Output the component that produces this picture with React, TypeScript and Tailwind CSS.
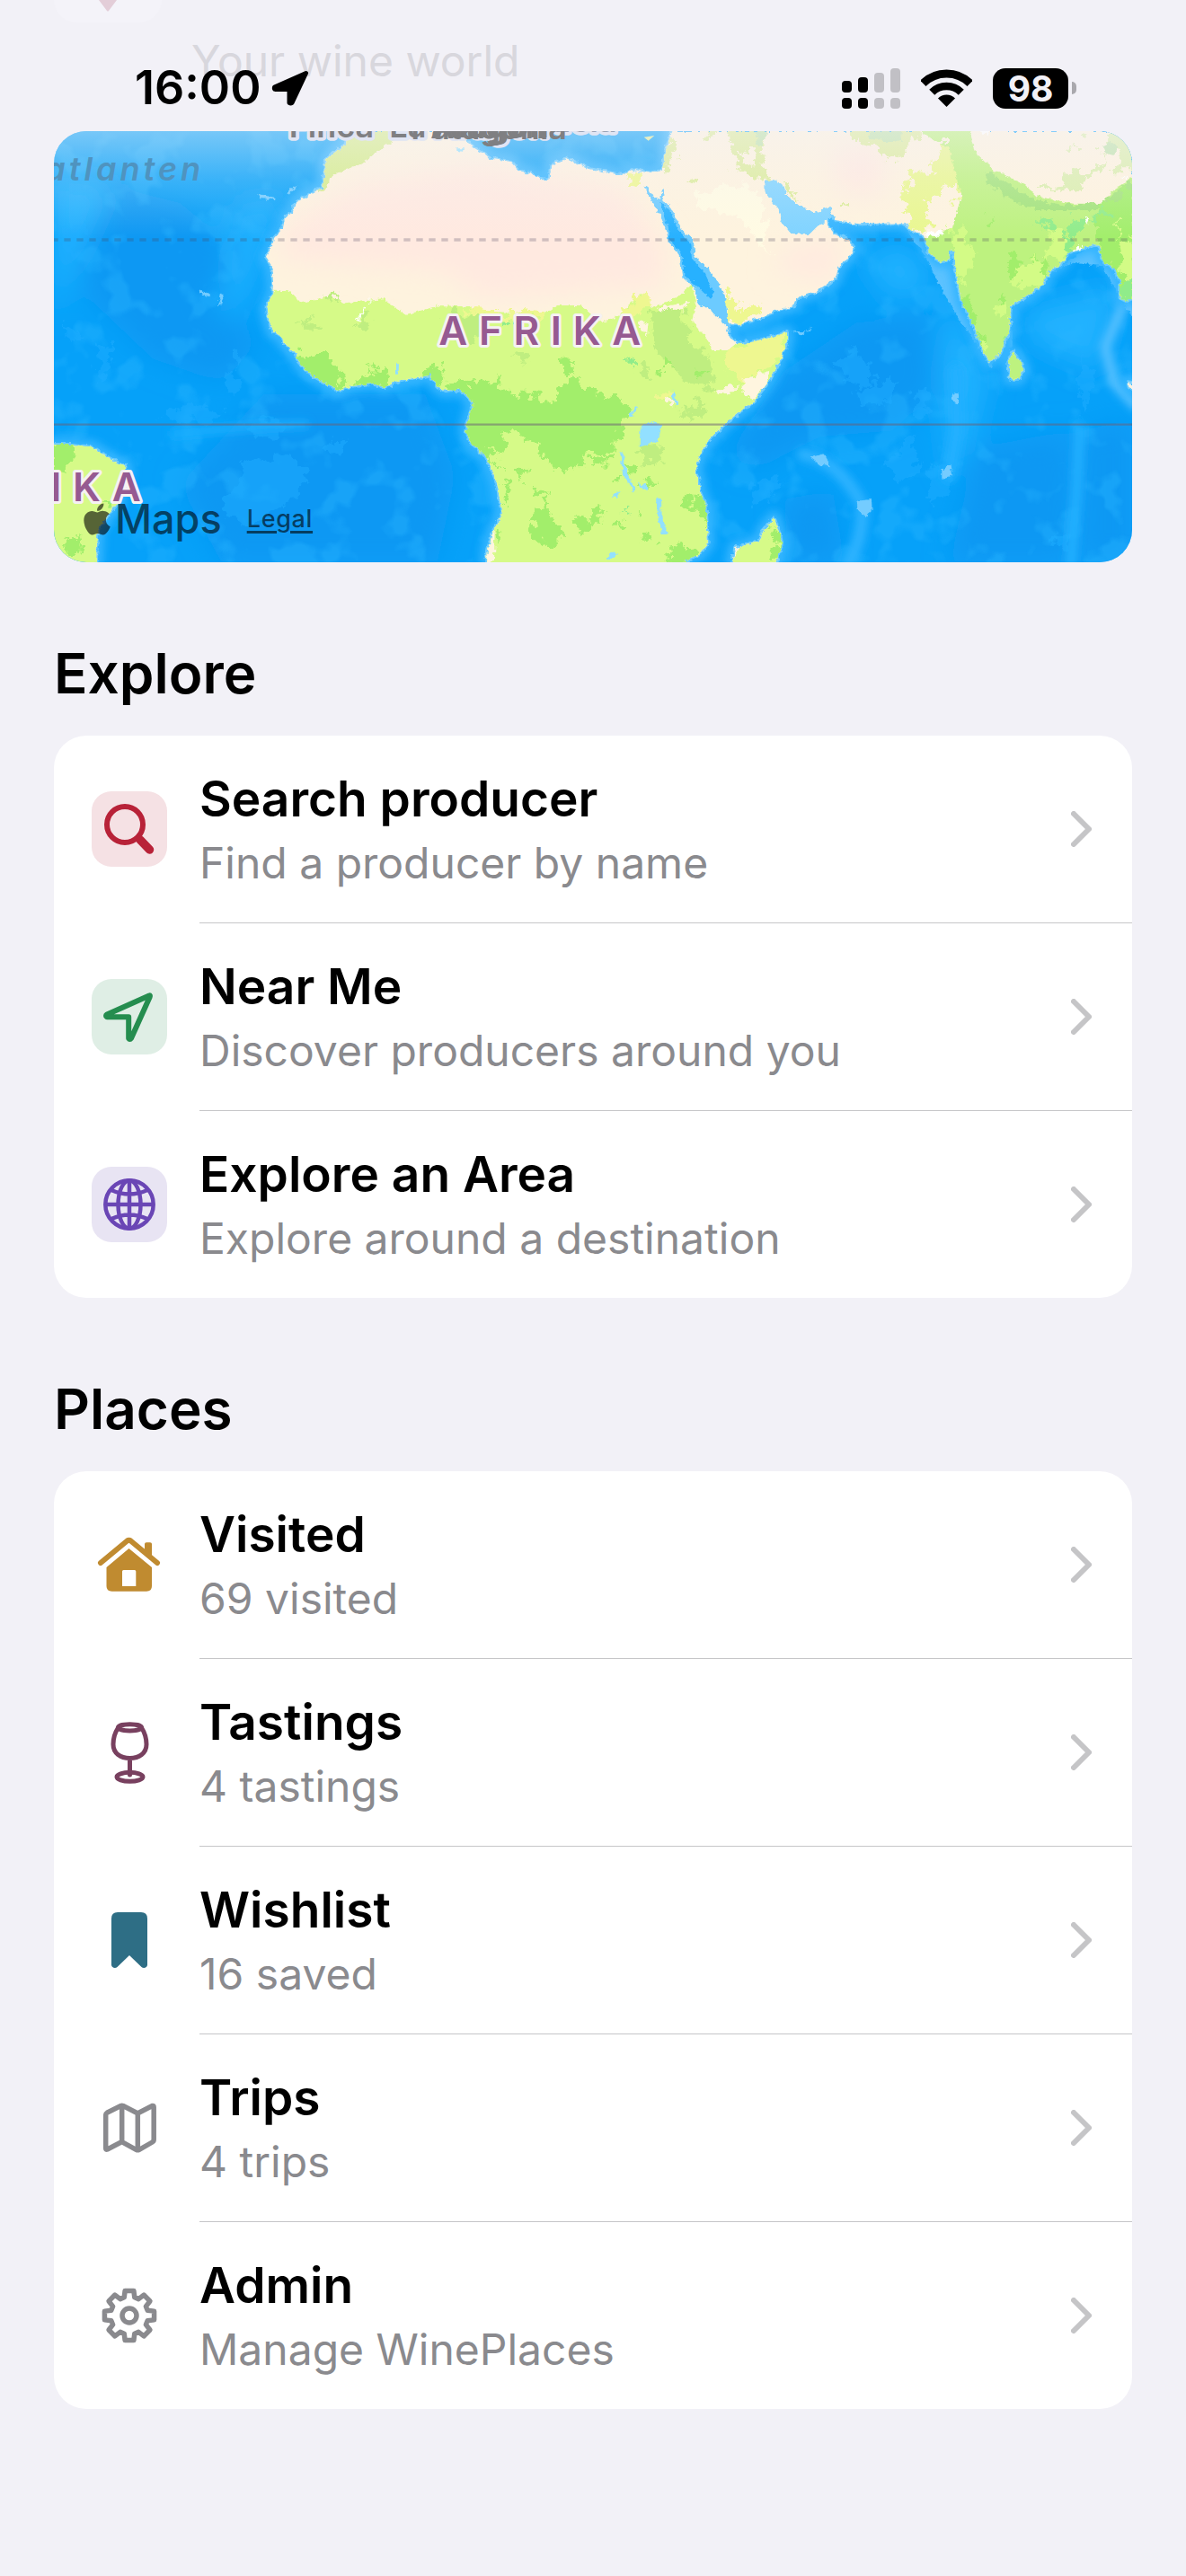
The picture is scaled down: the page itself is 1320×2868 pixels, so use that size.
import React from "react";
import { FaApple } from "react-icons/fa";

const LAND =
  "M985 0L980 37 930 77 905 102 905 142 897 192 880 197 808 237 798 270 772 287 765 324 735 357 730 382 708 422 725 447 732 502 730 542 710 592 718 632 732 672 755 680 770 707 808 747 825 782 870 820 950 867 990 852 1065 842 1105 855 1155 832 1255 815 1285 857 1305 867 1355 862 1375 877 1402 907 1390 942 1375 1002 1395 1047 1440 1082 1460 1122 1480 1177 1490 1242 1497 1282 1470 1327 1450 1392 1445 1460 2060 1460 2100 1440 2150 1417 2183 1377 2177 1252 2155 1202 2152 1162 2138 1137 2160 1072 2190 1027 2235 982 2290 937 2340 897 2390 832 2430 752 2448 702 2448 672 2380 692 2330 704 2285 710 2260 692 2248 667 2250 647 2200 607 2150 572 2140 527 2098 487 2090 412 2052 372 2045 327 2020 272 1990 222 1970 184 1980 184 2010 232 2025 227 2032 192 2040 194 2030 232 2050 242 2075 282 2095 327 2135 367 2140 417 2185 462 2220 512 2240 552 2252 642 2290 644 2370 620 2400 602 2470 582 2480 557 2555 532 2610 492 2620 452 2645 432 2672 392 2645 357 2610 347 2585 317 2580 292 2540 327 2525 344 2465 342 2430 302 2420 262 2375 202 2375 167 2400 162 2430 177 2450 217 2485 247 2540 274 2590 255 2608 297 2690 310 2840 307 2870 337 2900 342 2915 377 2920 402 2960 437 2990 430 2995 397 3005 402 3008 462 3020 512 3030 572 3060 622 3090 697 3105 742 3125 770 3160 742 3170 717 3190 667 3195 582 3230 562 3300 512 3325 467 3365 442 3380 412 3460 382 3490 382 3500 427 3540 462 3562 502 3560 557 3580 567 3620 552 3620 -20 2062 -20 2065 0 2045 62 2030 132 1990 140 1940 130 1895 147 1790 127 1715 92 1660 112 1655 157 1630 164 1595 142 1550 132 1525 102 1460 92 1405 57 1380 37 1360 -20 985 -20Z" +
  "M-20 1047L65 1047 130 1057 175 1087 210 1107 238 1117 240 1147 210 1242 180 1282 145 1337 140 1460 -20 1460Z" +
  "M2405 1292L2425 1352 2430 1377 2408 1460 2262 1460 2275 1392 2355 1372 2370 1332Z" +
  "M3202 737L3225 767 3237 797 3220 827 3192 827 3187 772Z" +
  "M3585 838L3620 842 3620 868 3590 856Z";

// eight teeth around (42, 42)
const GEAR = Array.from({ length: 8 }, (_, i) =>
  [
    [-16, 21],
    [-10, 28],
    [10, 28],
    [16, 21],
  ].map(([deg, r]) => {
    const a = ((i * 45 + deg) * Math.PI) / 180;
    return `${42 + r * Math.sin(a)} ${42 - r * Math.cos(a)}`;
  })
)
  .flat()
  .join(" L");

function WorldMap() {
  return (
    <svg
      viewBox="0 0 3600 1440"
      preserveAspectRatio="xMidYMid slice"
      className="block w-full h-[480px]"
      role="img"
      aria-label="Map"
    >
      <defs>
        <clipPath id="land">
          <path d={LAND} />
        </clipPath>
        <filter id="soft" x="-10%" y="-10%" width="120%" height="120%">
          <feGaussianBlur stdDeviation="45" />
        </filter>
        <filter id="shore" x="-5%" y="-5%" width="110%" height="110%">
          <feGaussianBlur stdDeviation="14" />
        </filter>
        <filter id="rough" x="0" y="0" width="100%" height="100%" colorInterpolationFilters="sRGB">
          <feTurbulence type="fractalNoise" baseFrequency="0.06" numOctaves="3" seed="4" />
          <feDisplacementMap in="SourceGraphic" scale="18" xChannelSelector="R" yChannelSelector="G" />
        </filter>
        <filter id="ragged" filterUnits="userSpaceOnUse" x="0" y="0" width="3600" height="1440" colorInterpolationFilters="sRGB">
          <feTurbulence type="fractalNoise" baseFrequency="0.025" numOctaves="4" seed="9" />
          <feDisplacementMap in="SourceGraphic" scale="80" xChannelSelector="R" yChannelSelector="G" />
        </filter>
        <filter id="seabed" filterUnits="userSpaceOnUse" x="0" y="0" width="3600" height="1440" colorInterpolationFilters="sRGB">
          <feTurbulence type="fractalNoise" baseFrequency="0.008" numOctaves="3" seed="12" />
          <feColorMatrix values="0 0 0 0 0.16  0 0 0 0 0.71  0 0 0 0 1  7 0 0 0 -3.8" />
        </filter>
        <linearGradient id="fade" x1="0" y1="0" x2="0" y2="1">
          <stop offset="0" stopColor="#f2f1f7" stopOpacity="0.48" />
          <stop offset="0.45" stopColor="#f2f1f7" stopOpacity="0.22" />
          <stop offset="1" stopColor="#f2f1f7" stopOpacity="0" />
        </linearGradient>
      </defs>

      {/* Ocean */}
      <rect width="3600" height="1440" fill="#06a1f9" />
      <g filter="url(#soft)">
        <g fill="#0f98f3">
          <path d="M60 150L420 240 640 420 500 560 690 700 560 840 330 760 120 560Z" />
          <path d="M700 880L1240 880 1340 1150 1280 1440 560 1440 420 1180Z" />
          <path d="M2440 800L2680 640 2920 620 2950 860 2800 1000 2560 1020 2340 1130 2250 1080Z" />
          <path d="M3080 1060L3390 1000 3410 1440 2990 1440Z" />
          <path d="M3440 1000L3600 960 3600 1440 3440 1440Z" />
          <path d="M2440 1230L2600 1200 2640 1440 2450 1440Z" />
        </g>
        <g fill="#22b2ff">
          <path d="M0 150L200 180 90 420 0 620Z" />
          <path d="M620 250L760 220 640 560 560 640 600 380Z" />
          <path d="M2980 560L3120 820 3060 1050 2990 1150 2960 820Z" />
          <path d="M3240 600L3560 520 3490 800 3260 700Z" />
          <path d="M2690 420L2860 380 2940 520 2800 560Z" />
        </g>
      </g>
      <rect width="3600" height="1440" filter="url(#seabed)" opacity="0.4" />
      <g fill="#1fadff" opacity="0.5" filter="url(#ragged)">
        <path d="M140 720L200 710 190 780 150 840Z" />
        <path d="M595 740L625 745 610 785Z" />
        <path d="M565 830L600 810 630 850 600 880 570 870Z" />
        <path d="M360 950L430 910 560 930 520 975 380 970Z" />
        <path d="M640 990L720 960 790 1000 700 1020Z" />
        <path d="M900 1050L980 1030 950 1100Z" />
        <path d="M640 1110L780 1080 860 1140 780 1240 640 1320 560 1260Z" />
        <path d="M2620 780L2670 710 2740 810 2720 850 2640 840Z" />
        <path d="M2690 860L2820 830 2780 920 2680 900Z" />
        <path d="M2880 870L2930 860 2910 950 2860 960Z" />
        <path d="M2850 1020L2900 1100 2830 1180 2780 1120Z" />
        <path d="M2930 1120L3010 1090 3000 1190 2920 1240Z" />
        <path d="M3420 760L3480 790 3440 960Z" />
        <path d="M3330 1360L3390 1330 3390 1400Z" />
        <path d="M2320 1200L2420 1140 2400 1220 2340 1240Z" />
        <path d="M40 420L110 360 90 300 30 330Z" />
        <path d="M20 640L90 680 60 720Z" />
      </g>
      <g fill="none" strokeLinecap="round" filter="url(#shore)">
        <path d="M2500 1080Q2620 1100 2700 1250Q2700 1370 2650 1450" stroke="#2eb3ff" strokeWidth="40" />
        <path d="M3010 800L3015 1000 2990 1150" stroke="#24b0ff" strokeWidth="46" />
        <path d="M3425 990L3415 1200 3395 1450" stroke="#24b0ff" strokeWidth="34" />
        <path d="M3575 570L3510 720 3540 840 3610 915" stroke="#55c0ff" strokeWidth="34" />
        <path d="M400 1010L700 985 840 980" stroke="#1fb0ff" strokeWidth="24" />
      </g>
      <g fill="#74ccff" filter="url(#rough)">
        <path d="M2525 1090L2570 1078 2595 1120 2560 1116Z" />
        <path d="M2680 1235L2730 1230 2732 1270 2710 1290 2685 1265Z" />
        <path d="M2965 1130L2995 1110 3000 1150 2965 1160Z" />
        <path d="M2998 875L3020 880 3018 910 3002 905Z" />
        <path d="M485 530L520 548 515 554 488 542Z" />
        <path d="M558 545L566 548 558 580 545 584Z" />
        <path d="M682 210L740 222 738 228 690 226Z" />
        <path d="M780 205L812 178 802 196 785 212Z" />
        <path d="M2460 668L2520 670 2530 655 2500 680Z" />
      </g>

      {/* Shallow water */}
      <path d="M2840 315L2910 420 2960 520 3030 640 3100 740 3130 790 3160 745 3200 720 3200 660 3050 400 2920 330Z" fill="#5cc2ff" filter="url(#rough)" />
      <path d="M3320 480L3400 440 3500 450 3550 540 3600 620 3600 540 3480 370Z" fill="#5cc2ff" filter="url(#rough)" />
      <path d={LAND} fill="none" stroke="#35b5ff" strokeWidth="46" strokeLinejoin="round" filter="url(#shore)" />
      <path d={LAND} fill="none" stroke="#6ccbff" strokeWidth="12" strokeLinejoin="round" filter="url(#rough)" />

      {/* Land */}
      <g filter="url(#rough)">
        <g clipPath="url(#land)">
          <rect width="3600" height="1440" fill="#fef3de" />
          <g filter="url(#soft)" fill="#ffe9e0">
            <path d="M760 330L1000 180 1400 110 1900 190 2040 380 2040 520 1700 540 1440 560 1300 470 760 430Z" />
            <path d="M2440 400L2640 360 2600 500 2400 460Z" />
            <path d="M2600 60L2780 40 2760 220 2620 200Z" />
          </g>
          <g filter="url(#ragged)" fill="#fffbe3">
            <path d="M2130 210L2200 200 2250 180 2340 200 2380 250 2370 330 2400 420 2350 360 2290 290 2140 240Z" />
          </g>

          {/* Savanna and everything south */}
          <path
            d="M700 532L790 535 825 574 915 552 970 574 1100 562 1175 612 1255 592 1290 582 1390 587 1440 607 1640 610 1680 582 1760 582 1830 637 1885 617 1960 542 1990 592 2080 557 2130 512 2145 572 2130 632 2180 692 2200 732 2250 732 2290 700 2470 650 2430 780 2300 990 2200 1460 1400 1460 700 880Z"
            fill="#d6fa88"
          />
          <path d="M-20 1040L260 1040 240 1460 -20 1460Z" fill="#d6fa88" />
          <path d="M2250 1460L2450 1460 2430 1280 2350 1280Z" fill="#d6fa88" />
          <path d="M890 0L1180 0 1090 60 1040 100 930 150 900 200 850 200Z" fill="#d5ec8c" />
          <g fill="#eef790" filter="url(#ragged)">
            <path d="M1890 600L1960 540 1980 560 1960 620 1880 620Z" />
            <path d="M1370 590L1440 600 1640 600 1600 630 1380 620Z" />
            <path d="M2250 740L2450 670 2420 770 2360 800 2300 830 2240 800Z" />
            <path d="M2240 520L2270 560 2280 600 2350 590 2370 580 2360 620 2250 650Z" />
            <path d="M1900 140L1970 130 1965 160 1940 170Z" />
            <path d="M2010 880L2050 870 2060 900 2020 900Z" />
          </g>
          <g fill="#fff5df" filter="url(#rough)">
            <path d="M2300 830L2390 800 2380 850 2330 900 2300 870Z" />
            <path d="M2205 870L2250 850 2290 850 2270 870 2220 880Z" />
            <path d="M2040 890L2085 900 2060 920Z" />
            <path d="M1450 1340L1472 1330 1470 1440 1445 1440Z" />
            <path d="M1955 630L1985 640 1980 680 1960 670Z" />
            <path d="M2020 590L2120 570 2100 600 2020 605Z" />
          </g>
          <g fill="#bfee80" filter="url(#ragged)">
            <path d="M2000 600L2110 590 2120 680 2190 760 2200 860 2100 830 2010 740Z" />
            <path d="M1310 620L1400 610 1450 680 1360 720 1320 690Z" />
            <path d="M810 640L880 625 870 645 820 650Z" />
            <path d="M1000 660L1040 600 1060 610 1040 660Z" />
            <path d="M1530 740L1590 735 1585 760 1540 762Z" />
            <path d="M1965 1060L2030 1055 2020 1110 1970 1110Z" />
            <path d="M1960 780L1980 770 1990 830 1965 830Z" />
            <path d="M2085 920L2170 910 2165 955 2100 960Z" />
            <path d="M910 555L950 545 950 570 920 570Z" />
          </g>

          {/* Rainforest */}
          <g fill="#a2ee6b" filter="url(#ragged)">
            <path d="M1320 857L1350 822 1400 837 1490 832 1510 872 1590 872 1670 892 1700 850 1730 817 1780 857 1820 882 1870 885 1920 917 1910 960 1885 987 1875 1072 1830 1087 1780 1062 1760 1122 1695 1137 1650 1102 1605 1042 1520 997 1500 1027 1510 1062 1485 1082 1440 1055 1485 1127 1450 1127 1340 1012 1340 900Z" />
            <path d="M790 742L900 747 940 770 965 832 960 900 820 820Z" />
            <path d="M1000 855L1060 782 1080 800 1110 800 1120 880Z" />
            <path d="M1220 790L1260 775 1300 800 1290 820 1310 840 1290 870 1240 820Z" />
            <path d="M1685 770L1730 765 1735 800 1700 812Z" />
            <path d="M1600 1250L1650 1235 1660 1290 1700 1330 1700 1370 1590 1365 1600 1310Z" />
            <path d="M1730 1290L1790 1285 1800 1260 1835 1265 1830 1310 1780 1320 1770 1350 1735 1330Z" />
            <path d="M1495 1180L1530 1170 1535 1200 1500 1235Z" />
            <path d="M1545 1140L1590 1145 1580 1160 1545 1160Z" />
            <path d="M1590 1190L1640 1200 1650 1225 1610 1210Z" />
            <path d="M1785 1090L1870 1095 1860 1120 1800 1115Z" />
            <path d="M2045 1460L2060 1390 2110 1370 2140 1405 2110 1460Z" />
            <path d="M2100 1230L2195 1215 2200 1320 2140 1290 2145 1250 2105 1250Z" />
            <path d="M1910 1110L1945 1120 1930 1145 1908 1140Z" />
            <path d="M1860 1155L1900 1155 1890 1175 1865 1170Z" />
            <path d="M1960 1170L2020 1172 2015 1185 1965 1185Z" />
            <path d="M1950 1280L1970 1260 1960 1290 1940 1300Z" />
            <path d="M1880 1300L1905 1305 1900 1325 1882 1320Z" />
            <path d="M1960 1350L1985 1340 2000 1370 1965 1370Z" />
            <path d="M1480 1350L1510 1345 1500 1370 1480 1370Z" />
            <path d="M2030 775L2070 765 2070 790 2030 800Z" />
            <path d="M2150 800L2170 800 2170 820 2150 815Z" />
            <path d="M-40 1060L60 1050 50 1125 20 1130 -20 1130Z" />
            <path d="M40 1360L90 1350 100 1400 40 1410Z" />
            <path d="M160 1220L200 1225 190 1260 165 1255Z" />
            <path d="M2400 1320L2450 1370 2430 1440 2390 1430Z" />
            <path d="M3202 740L3235 790 3210 825 3200 790Z" />
          </g>

          {/* Near East */}
          <g fill="#dcec9c" filter="url(#ragged)">
            <path d="M2265 40L2290 50 2300 100 2355 110 2350 150 2310 145 2270 110Z" />
            <path d="M2050 20L2080 30 2075 80 2050 130 2020 130Z" />
            <path d="M2240 -40L2340 -40 2380 60 2370 130 2390 170 2360 170 2330 80 2250 30Z" />
            <path d="M2110 165L2130 160 2140 180 2120 190Z" />
            <path d="M2150 -20L2220 -20 2200 30Z" />
            <path d="M2440 180L2470 190 2480 230 2455 220Z" />
            <path d="M2620 240L2670 240 2665 260 2630 255Z" />
            <path d="M2640 -40L2900 -40 2860 70 2780 90 2740 50 2680 25Z" />
          </g>
          <g fill="#bfe3ab" filter="url(#ragged)">
            <path d="M2335 -10L2370 -10 2365 70 2340 50Z" />
            <path d="M2710 -30L2830 -30 2820 35 2740 30Z" />
          </g>

          {/* Indian subcontinent */}
          <path
            d="M2840 180L2870 150 2920 130 2990 40 3050 100 3040 220 2960 260 2920 250 2930 310 2900 352 2860 310 2835 220Z"
            fill="#e9f78f"
            filter="url(#ragged)"
          />
          <path
            d="M2860 -20L3070 -20 3060 20 3085 82 3140 132 3240 177 3280 217 3400 242 3500 242 3540 192 3620 142 3620 600 3300 560 3240 700 3260 860 3100 790 2900 420 2900 360 3000 320 3030 220 2990 60Z"
            fill="#bdf27f"
          />
          <g fill="#fef3de" filter="url(#ragged)">
            <path d="M2900 250L3000 180 3020 215 2960 270 3000 280 3000 300 2910 330 2925 290Z" />
            <path d="M2860 50L2970 30 2975 50 2920 60 2900 160 2860 130Z" />
          </g>
          <path
            d="M3110 140Q3180 210 3290 250Q3420 275 3500 255Q3560 230 3600 170"
            fill="none"
            stroke="#a3e37b"
            strokeWidth="34"
            filter="url(#rough)"
          />
          <g fill="#a2ee6b" filter="url(#ragged)">
            <path d="M3490 250L3640 170 3640 590 3540 520 3480 390 3480 300Z" />
            <path d="M3190 400L3240 440 3230 480 3190 500 3180 450Z" />
            <path d="M3260 430L3320 420 3310 480 3260 470Z" />
            <path d="M2995 520L3050 560 3080 650 3110 670 3100 760 3040 650 3000 580Z" />
            <path d="M3150 560L3190 545 3180 600 3150 590Z" />
            <path d="M3110 290L3140 280 3140 310 3110 310Z" />
          </g>
          <g fill="#d3fb86" filter="url(#ragged)">
            <path d="M3000 320L3040 315 3060 400 3090 420 3060 430 3050 510 3010 500Z" />
            <path d="M3200 500L3290 420 3300 500 3220 560Z" />
            <path d="M3130 590L3190 570 3190 630 3150 610Z" />
            <path d="M3560 380L3620 340 3620 500 3570 490Z" />
            <path d="M3550 300L3560 300 3540 390 3535 380Z" />
            <path d="M3330 320L3380 330 3370 440 3310 430Z" />
            <path d="M3090 690L3110 690 3115 750 3095 740Z" />
          </g>
          <g fill="#90ec8a" filter="url(#ragged)">
            <path d="M3390 300L3430 290 3440 310 3420 350 3395 340Z" />
            <path d="M3380 350L3405 340 3410 400 3370 410Z" />
            <path d="M3285 305L3330 300 3325 325 3290 320Z" />
            <path d="M3460 280L3530 265 3520 290 3470 290Z" />
            <path d="M3565 500L3620 480 3620 590 3560 580Z" />
            <path d="M3170 690L3190 690 3180 720Z" />
            <path d="M1500 630L1520 625 1515 650Z" />
            <path d="M1915 750L1930 770 1925 790 1915 780Z" />
            <path d="M1900 1265L1925 1260 1920 1285Z" />
          </g>
          <g fill="#dbeeae" filter="url(#ragged)">
            <path d="M3390 130L3440 140 3450 180 3390 200 3290 190 3280 180 3380 175Z" />
            <path d="M3440 140L3500 100 3510 130 3460 150Z" />
            <path d="M3510 40L3560 -10 3640 -20 3640 130 3540 130 3560 70 3500 80Z" />
            <path d="M3380 60L3410 55 3400 70Z" />
            <path d="M3430 30L3450 20 3460 40Z" />
          </g>
          <path d="M3500 50L3530 35 3550 50 3540 80 3510 75Z" fill="#c0e3ac" />
          <g fill="#fff" filter="url(#rough)">
            <path d="M2905 335L2960 335 2965 350 2910 350Z" />
            <path d="M3410 390L3435 380 3430 405 3415 410Z" />
            <path d="M3440 290L3460 285 3450 305Z" />
            <path d="M3560 155L3590 155 3585 165Z" />
            <path d="M1005 638L1035 590 1060 555 1035 600 1020 632Z" />
            <path d="M3090 0L3130 0 3120 15Z" />
          </g>

          {/* Lakes */}
          <g fill="#92e0ff">
            <path d="M1958 985L1990 968 2030 980 2015 1040 1990 1045 1955 1055Z" />
            <path d="M1890 1067L1905 1090 1908 1130 1940 1195 1935 1205 1900 1150Z" />
            <path d="M2010 1227L2028 1225 2030 1290 2050 1345 2035 1350 2018 1300Z" />
            <path d="M1920 950L1945 922 1950 925 1930 955Z" />
            <path d="M2062 880L2067 865 2085 915 2078 915Z" />
            <path d="M1950 1172L1985 1190 1980 1200 1955 1185Z" />
            <path d="M1863 1220L1888 1200 1880 1225Z" />
            <path d="M1140 778L1152 778 1150 812 1140 812Z" />
            <path d="M1845 1425L1870 1405 1888 1408 1850 1432Z" />
            <path d="M1345 55L1368 55 1365 68 1345 66Z" />
          </g>
        </g>
      </g>

      {/* Red Sea and Gulf */}
      <g filter="url(#rough)">
        <path
          d="M1970 184L1980 184 2010 232 2025 227 2032 192 2040 194 2030 232 2050 242 2075 282 2095 327 2135 367 2140 417 2185 462 2220 512 2240 552 2252 642 2255 660 2200 607 2150 572 2140 527 2098 487 2090 412 2052 372 2045 327 2020 272 1990 222Z"
          fill="#6ccbff"
        />
        <path d="M2025 240L2055 260 2085 330 2125 375 2130 425 2175 475 2205 540 2190 560 2150 520 2105 480 2095 405 2060 365 2050 315Z" fill="#27b1ff" />
        <path d="M2375 167L2400 162 2430 177 2450 217 2485 247 2540 274 2590 255 2600 290 2580 292 2525 344 2465 342 2430 302 2420 262 2375 202Z" fill="#7fd3ff" />
      </g>
      <path d="M1970 20L2005 15 1985 32Z" fill="#dcec9c" />

      {/* Tropic and equator */}
      <path d="M0 363H3600" stroke="#4a4560" strokeOpacity="0.26" strokeWidth="11" strokeDasharray="22 20" strokeDashoffset="8" />
      <path d="M0 980H3600" stroke="#6b5f74" strokeOpacity="0.52" strokeWidth="7" />

      <rect width="3600" height="360" fill="url(#fade)" />

      {/* Labels */}
      <text x="501" y="165" textAnchor="end" className="fill-[#4f93bf] text-[108px] font-semibold italic tracking-[12px]">
        Nordatlanten
      </text>
      <g className="fill-[#7f7f82] text-[108px] font-semibold" stroke="#e1e5f3" strokeWidth="22" strokeLinejoin="round" paintOrder="stroke">
        <text x="1880" y="4" textAnchor="end" className="fill-[#9aa3b5]">
          Mandela
        </text>
        <text x="785" y="22">
          Finca
        </text>
        <text x="1120" y="22">
          La Aragon
        </text>
        <text x="1713" y="26" textAnchor="end" paintOrder="normal" stroke="none">
          Patagonia
        </text>
        <text x="1640" y="24" textAnchor="end" paintOrder="normal" stroke="none">
          Aragon
        </text>
      </g>
      <g
        className="fill-[#965a91] text-[132px] font-semibold tracking-[38px]"
        stroke="#f6f1f3"
        strokeWidth="18"
        strokeLinejoin="round"
        paintOrder="stroke"
      >
        <text x="1998" y="714" textAnchor="end">
          AFRIKA
        </text>
        <text x="328" y="1237" textAnchor="end">
          SYDAMERIKA
        </text>
      </g>
    </svg>
  );
}

function StatusBar() {
  return (
    <header className="relative flex h-[146px] items-center justify-between pt-[50px] pl-[150px] pr-[122px]">
      {/* Page header scrolled behind the status bar */}
      <div className="absolute left-15 top-0 h-[25px] w-[120px] rounded-b-[36px] bg-[#f4f3f9]">
        <svg viewBox="0 0 20 14" className="mx-auto h-[14px] w-5">
          <path d="M0 0H20L11 12Q10 13 9 12Z" fill="#e3cdd8" />
        </svg>
      </div>
      <p className="absolute left-[213px] top-[38px] text-[48px] leading-[60px] text-[#d8d7dd]">Your wine world</p>

      <div className="relative flex items-center gap-3">
        <time className="text-[52px] font-semibold leading-[60px]">16:00</time>
        <svg viewBox="0 0 42 40" className="h-10 w-[42px]">
          <path d="M38.500 3.500 3.500 19 Q3 21 4.500 21.500H20V36.500Q21.500 37.500 23 36.500Z" fill="#000" stroke="#000" strokeWidth="5" strokeLinejoin="round" />
        </svg>
      </div>

      <div className="flex items-center gap-[23px]">
        <svg viewBox="0 0 65 45" className="h-[45px] w-[65px]">
          <g fill="#000">
            <rect x="0" y="14" width="11" height="13" rx="4" />
            <rect x="18" y="10" width="11" height="17" rx="4" />
            <rect x="0" y="33" width="11" height="12" rx="4" />
            <rect x="18" y="33" width="11" height="12" rx="4" />
          </g>
          <g fill="#c1c0c5">
            <rect x="36" y="5" width="11" height="22" rx="4" />
            <rect x="54" y="0" width="11" height="27" rx="4" />
            <rect x="36" y="33" width="11" height="12" rx="4" />
            <rect x="54" y="33" width="11" height="12" rx="4" />
          </g>
        </svg>
        <svg viewBox="0 0 57 42" className="h-[42px] w-[57px]">
          <clipPath id="fan">
            <path d="M28.500 42L-16.500 -3H73.500Z" />
          </clipPath>
          <g clipPath="url(#fan)" fill="none" stroke="#000">
            <circle cx="28.500" cy="42" r="37" strokeWidth="9" />
            <circle cx="28.500" cy="42" r="23" strokeWidth="8.500" />
            <circle cx="28.500" cy="42" r="13.500" fill="#000" stroke="none" />
          </g>
        </svg>
        <div className="flex items-center gap-1">
          <div className="flex h-[45px] w-[84px] items-center justify-center rounded-[14px] bg-black text-[39px] font-bold leading-none text-[#f2f1f7]">
            98
          </div>
          <div className="h-[14px] w-[5px] rounded-r-full bg-[#a9a8ad]" />
        </div>
      </div>
    </header>
  );
}

const icons = {
  search: (
    <g stroke="#b82238" strokeLinecap="round">
      <circle cx="37" cy="37" r="20" strokeWidth="6" />
      <path d="M54 54 64.500 65" strokeWidth="9.500" />
    </g>
  ),
  near: (
    <path
      d="M64 18.500Q65.500 18 64.700 20L44 66Q42.500 68 41.200 66V42.300H17Q15 41 17 39.500Z"
      stroke="#258d4f"
      strokeWidth="6"
      strokeLinejoin="round"
    />
  ),
  globe: (
    <g stroke="#6a46b5" strokeWidth="4.500">
      <circle cx="42" cy="42" r="26.700" />
      <ellipse cx="42" cy="42" rx="12.500" ry="26.700" />
      <path d="M42 15V69M15 42H69M22 26Q42 35 62 26M22 58Q42 49 62 58" />
    </g>
  ),
  house: (
    <g fill="#c08b30">
      <path d="M10 40 39.500 15.500Q41.500 14 43.500 15.500L73 40" fill="none" stroke="#c08b30" strokeWidth="6" strokeLinecap="round" />
      <path d="M59 30V19Q59 17.300 61 17.300H65Q67 17.300 67 19V37Z" />
      <path
        fillRule="evenodd"
        d="M41.500 24 67 45V66Q67 71.700 61 71.700H22.500Q16.500 71.700 16.500 66V45ZM35.500 48Q34 48 34 49.500V66H49.300V49.500Q49.300 48 47.800 48Z"
      />
    </g>
  ),
  wine: (
    <g stroke="#78405f" strokeWidth="5" strokeLinecap="round" strokeLinejoin="round">
      <ellipse cx="42.500" cy="14.300" rx="13" ry="3.600" />
      <path d="M29.500 14.500C26 20 24 27 24 33C24 43 32 48.500 42.500 48.500S61 43 61 33C61 27 59 20 55.500 14.500M42.500 49V67" />
      <ellipse cx="42.500" cy="69.300" rx="14.500" ry="5" />
    </g>
  ),
  bookmark: (
    <path d="M22 18Q22 11 29 11H55Q62 11 62 18V69.500C62 73 57.500 74 55.500 72L42 59 28.500 72C26.500 74 22 73 22 69.500Z" fill="#2e6e85" />
  ),
  map: (
    <path
      d="M15.700 27.500Q15.700 26 17 25.300L32.500 17.500Q33.700 17 35 17.500L50 25.300Q51.300 26 52.500 25.300L67.500 17.500Q69.200 17 69.200 19V55Q69.200 57 67.500 58L53 66.300Q51.300 67.300 49.500 66.300L35 58.300Q33.700 57.500 32.300 58.300L17.500 66Q15.700 66.800 15.700 65ZM33.700 18V58M51.300 26V66"
      stroke="#8a8a8e"
      strokeWidth="5.500"
      strokeLinejoin="round"
    />
  ),
  gear: (
    <g stroke="#8a8a8e" strokeWidth="5.500" strokeLinejoin="round">
      <path d={`M${GEAR}Z`} />
      <circle cx="42" cy="42" r="8" />
    </g>
  ),
};

interface Item {
  title: string;
  subtitle: string;
  icon: keyof typeof icons;
  tile?: string;
}

const explore: Item[] = [
  { title: "Search producer", subtitle: "Find a producer by name", icon: "search", tile: "bg-[#f5e1e4]" },
  { title: "Near Me", subtitle: "Discover producers around you", icon: "near", tile: "bg-[#dfeee5]" },
  { title: "Explore an Area", subtitle: "Explore around a destination", icon: "globe", tile: "bg-[#e8e4f3]" },
];

const places: Item[] = [
  { title: "Visited", subtitle: "69 visited", icon: "house" },
  { title: "Tastings", subtitle: "4 tastings", icon: "wine" },
  { title: "Wishlist", subtitle: "16 saved", icon: "bookmark" },
  { title: "Trips", subtitle: "4 trips", icon: "map" },
  { title: "Admin", subtitle: "Manage WinePlaces", icon: "gear" },
];

function Section({ title, items }: { title: string; items: Item[] }) {
  return (
    <section className="mt-21">
      <h2 className="mb-[29px] text-[62px] font-semibold leading-[80px]">{title}</h2>
      <ul className="overflow-hidden rounded-[36px] bg-white">
        {items.map((item, i) => (
          <li key={item.title}>
            {i > 0 && <div className="ml-[162px] h-px bg-[#c6c6c8]" />}
            <button type="button" className="flex w-full items-center py-9 pl-[42px] pr-[45px] text-left">
              <span className={`mr-9 size-21 shrink-0 rounded-[22px] ${item.tile ?? ""}`}>
                <svg viewBox="0 0 84 84" fill="none" className="size-21">
                  {icons[item.icon]}
                </svg>
              </span>
              <span className="flex flex-1 flex-col gap-2">
                <span className="text-[55px] font-semibold leading-[68px]">{item.title}</span>
                <span className="text-[48px] leading-[60px] text-[#8a8a8e]">{item.subtitle}</span>
              </span>
              <svg viewBox="0 0 23 40" fill="none" className="h-10 w-[23px]">
                <path d="M3 3 20 20 3 37" stroke="#c5c5c7" strokeWidth="6" strokeLinecap="round" strokeLinejoin="round" />
              </svg>
            </button>
          </li>
        ))}
      </ul>
    </section>
  );
}

function App() {
  return (
    <div className="min-h-screen bg-[#f2f1f7] font-['Inter',sans-serif] text-black">
      <StatusBar />
      <main className="px-15 pb-20">
        <div className="relative overflow-hidden rounded-[36px]">
          <WorldMap />
          <div className="absolute bottom-5 left-7 flex items-center text-black/60">
            <FaApple className="size-10" />
            <span className="text-[45px] font-medium leading-[56px]">Maps</span>
            <a href="#legal" className="ml-7 text-[27px] font-medium leading-8 tracking-wide underline decoration-[3px] underline-offset-4">
              Legal
            </a>
          </div>
        </div>
        <Section title="Explore" items={explore} />
        <Section title="Places" items={places} />
      </main>
    </div>
  );
}

export default App;
